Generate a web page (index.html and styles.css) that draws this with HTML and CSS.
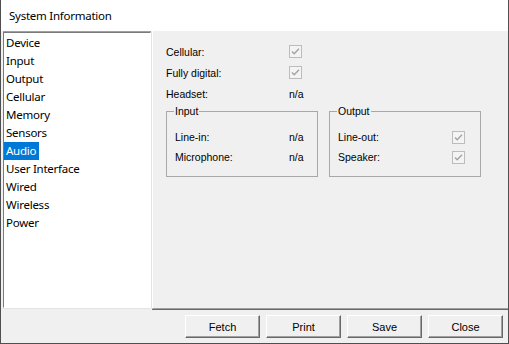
FILE: index.html
```html
<!DOCTYPE html>
<html>
<head>
<meta charset="utf-8">
<link rel="stylesheet" href="styles.css">
</head>
<body>
<div class="window">
  <div class="titlebar">System Information</div>
  <div class="main">
    <div class="list">
      <div class="item"><span>Device</span></div>
      <div class="item"><span>Input</span></div>
      <div class="item"><span>Output</span></div>
      <div class="item"><span>Cellular</span></div>
      <div class="item"><span>Memory</span></div>
      <div class="item"><span>Sensors</span></div>
      <div class="item selected"><span>Audio</span></div>
      <div class="item"><span>User Interface</span></div>
      <div class="item"><span>Wired</span></div>
      <div class="item"><span>Wireless</span></div>
      <div class="item"><span>Power</span></div>
    </div>
    <div class="panel">
      <div class="rows">
        <div class="label">Cellular:</div>
        <div class="value"><svg class="check" width="13" height="13" viewBox="0 0 13 13"><rect x="0.5" y="0.5" width="12" height="12" fill="#f4f4f4" stroke="#bcbcbc"/><polyline points="3,6.5 5.2,8.8 10,3.8" fill="none" stroke="#a3a3a3" stroke-width="1.4"/></svg></div>
        <div class="label">Fully digital:</div>
        <div class="value"><svg class="check" width="13" height="13" viewBox="0 0 13 13"><rect x="0.5" y="0.5" width="12" height="12" fill="#f4f4f4" stroke="#bcbcbc"/><polyline points="3,6.5 5.2,8.8 10,3.8" fill="none" stroke="#a3a3a3" stroke-width="1.4"/></svg></div>
        <div class="label">Headset:</div>
        <div class="value">n/a</div>
      </div>
      <div class="groups">
        <fieldset class="group">
          <legend>Input</legend>
          <div class="grows">
            <div class="label">Line-in:</div>
            <div class="value">n/a</div>
            <div class="label">Microphone:</div>
            <div class="value">n/a</div>
          </div>
        </fieldset>
        <fieldset class="group">
          <legend>Output</legend>
          <div class="grows">
            <div class="label">Line-out:</div>
            <div class="value"><svg class="check" width="13" height="13" viewBox="0 0 13 13"><rect x="0.5" y="0.5" width="12" height="12" fill="#f4f4f4" stroke="#bcbcbc"/><polyline points="3,6.5 5.2,8.8 10,3.8" fill="none" stroke="#a3a3a3" stroke-width="1.4"/></svg></div>
            <div class="label">Speaker:</div>
            <div class="value"><svg class="check" width="13" height="13" viewBox="0 0 13 13"><rect x="0.5" y="0.5" width="12" height="12" fill="#f4f4f4" stroke="#bcbcbc"/><polyline points="3,6.5 5.2,8.8 10,3.8" fill="none" stroke="#a3a3a3" stroke-width="1.4"/></svg></div>
          </div>
        </fieldset>
      </div>
    </div>
  </div>
  <div class="footer">
    <button class="btn">Fetch</button>
    <button class="btn">Print</button>
    <button class="btn">Save</button>
    <button class="btn">Close</button>
  </div>
</div>
</body>
</html>
```
FILE: styles.css
```css
* { box-sizing: border-box; }
html, body { margin: 0; padding: 0; background: #f0f0f0; }
.window {
  width: 509px;
  height: 344px;
  background: #f0f0f0;
  border: 1px solid #4f4f4f;
  border-top: none;
  display: flex;
  flex-direction: column;
  overflow: hidden;
}
.titlebar {
  height: 31px;
  flex: none;
  background: #fff;
  padding-left: 8px;
  font-family: "Segoe UI", "Noto Sans", sans-serif;
  font-size: 11.5px;
  letter-spacing: -0.25px;
  line-height: 31px;
  color: #000;
}
.main {
  display: flex;
  height: 279px;
  flex: none;
}
.list {
  margin-left: 2px;
  margin-top: 1px;
  width: 148px;
  height: 276px;
  background: #fff;
  border-style: solid;
  border-width: 1px;
  border-color: #7a7a7a #fff #fff #7a7a7a;
  box-shadow: 0 -1px 0 #a0a0a0, 1px 0 0 #e3e3e3, 0 1px 0 #e3e3e3;
  padding-top: 1px;
  font-family: "Segoe UI", "Noto Sans", sans-serif;
  font-size: 11.5px;
  letter-spacing: -0.25px;
}
.item {
  height: 18px;
  line-height: 18px;
}
.item span {
  display: inline-block;
  padding: 0 3px 0 2px;
  color: #000;
}
.item.selected span {
  background: #0078d7;
  color: #fff;
}
.panel {
  flex: 1;
  margin-left: 1px;
  border-left: 1px solid #fff;
  border-bottom: 1px solid #a0a0a0;
  box-shadow: 0 1px 0 #696969;
  padding: 10px 0 0 13px;
  font-family: "Liberation Sans", Arial, sans-serif;
  font-size: 10.5px;
  color: #000;
  height: 278px;
}
.rows {
  display: grid;
  grid-template-columns: 123px auto;
  grid-auto-rows: 21px;
  align-items: center;
}
.value { display: flex; align-items: center; }
.check { display: block; }
.groups {
  display: flex;
  gap: 11px;
  margin-top: 1px;
}
.group {
  width: 152px;
  margin: 0;
  border: 1px solid #a8a8a8;
  padding: 10px 0 9px 8px;
  min-width: 0;
}
.group legend {
  padding: 0 1px;
  margin-left: -1px;
  line-height: 12px;
  font-size: 10.5px;
}
.grows {
  display: grid;
  grid-template-columns: 114px auto;
  grid-auto-rows: 20px;
  align-items: center;
}
.footer {
  flex: 1;
  display: flex;
  justify-content: flex-end;
  align-items: flex-start;
  gap: 6px;
  padding: 5px 5px 0 0;
}
.btn {
  width: 75px;
  height: 23px;
  margin: 0;
  padding: 0;
  background: #f0f0f0;
  border-style: solid;
  border-width: 1px;
  border-color: #fff #696969 #696969 #fff;
  box-shadow: inset -1px -1px 0 #a0a0a0;
  font-family: "Liberation Sans", Arial, sans-serif;
  font-size: 11px;
  color: #000;
}
```
